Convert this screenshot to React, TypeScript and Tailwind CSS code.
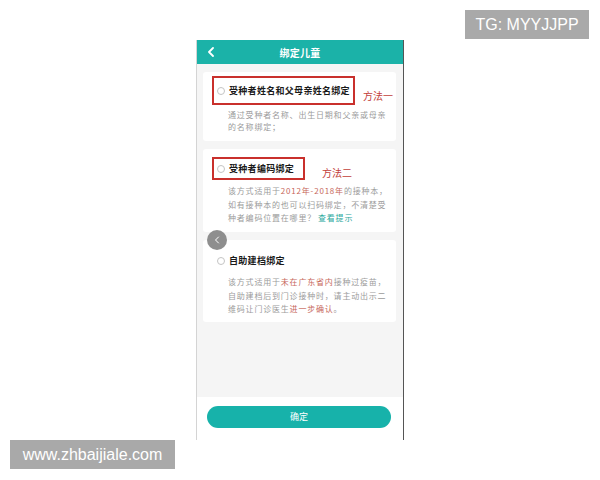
import React from 'react';

const cjk = "font-['Noto_Sans_CJK_SC','Noto_Sans',sans-serif]";

function Radio() {
  return <span className="w-[8px] h-[8px] rounded-full border border-[#c4c4c4] bg-white mr-[4px] shrink-0" />;
}

function TitleRow({
  title,
  boxW,
  boxH,
  highlight,
  label,
  labelGap,
  labelDrop,
}: {
  title: string;
  boxW: string;
  boxH: string;
  highlight?: boolean;
  label?: string;
  labelGap?: string;
  labelDrop?: string;
}) {
  return (
    <div className="flex items-center ml-[9px]">
      <div
        className={`${boxW} ${boxH} flex items-center pl-[3px] border-2 ${
          highlight ? 'border-[#c9302c]' : 'border-transparent'
        }`}
      >
        <Radio />
        <span className="text-[9px] font-bold tracking-[0.3px] text-[#1a1a1a] whitespace-nowrap">{title}</span>
      </div>
      {label && (
        <span className={`${labelGap} ${labelDrop} text-[10px] text-[#c2403a] whitespace-nowrap`}>{label}</span>
      )}
    </div>
  );
}

const red = 'text-[#c7675b]';

export default function App() {
  return (
    <div className={`relative w-[600px] h-[480px] bg-white overflow-hidden ${cjk}`}>
      <div className="pt-[40px]">
        <div className="mx-auto w-[208px] h-[400px] flex flex-col border-l border-[#d4d4d4] border-r border-r-[#555]">
          {/* header */}
          <div className="h-[24px] bg-[#1bb2a8] grid grid-cols-[1fr_auto_1fr] items-center">
            <div className="pl-[10px] flex items-center">
              <svg width="8" height="10" viewBox="0 0 8 10" fill="none">
                <path d="M6 1 L2 5 L6 9" stroke="white" strokeWidth="1.8" strokeLinecap="round" strokeLinejoin="round" />
              </svg>
            </div>
            <span className="text-[10px] font-bold text-white tracking-[0.3px]">绑定儿童</span>
            <div />
          </div>

          {/* content */}
          <div className="flex-1 bg-[#f5f5f5] pl-[6px] pr-[7px] pt-[8px] flex flex-col gap-[8px]">
            <div className="bg-white rounded-[3px] pt-[4px] pb-[8px]">
              <TitleRow
                title="受种者姓名和父母亲姓名绑定"
                boxW="w-[143px]"
                boxH="h-[29px]"
                highlight
                label="方法一"
                labelGap="ml-[8px]"
                labelDrop="mt-[9px]"
              />
              <div className="mt-[4px] pl-[25px] text-[8px] leading-[12px] tracking-[0.8px] text-[#9b9b9b] whitespace-nowrap">
                <div>通过受种者名称、出生日期和父亲或母亲</div>
                <div>的名称绑定；</div>
              </div>
            </div>

            <div className="bg-white rounded-[3px] pt-[8px] pb-[7.5px]">
              <TitleRow
                title="受种者编码绑定"
                boxW="w-[93px]"
                boxH="h-[23px]"
                highlight
                label="方法二"
                labelGap="ml-[17px]"
                labelDrop="mt-[7px]"
              />
              <div className="mt-[4px] pl-[25px] text-[8px] leading-[13.5px] tracking-[0.8px] text-[#9b9b9b] whitespace-nowrap">
                <div>
                  该方式适用于<span className={red}>2012年-2018年</span>的接种本，
                </div>
                <div>如有接种本的也可以扫码绑定，不清楚受</div>
                <div>
                  种者编码位置在哪里？<span className="ml-[2px] text-[#2aa89c]">查看提示</span>
                </div>
              </div>
            </div>

            <div className="bg-white rounded-[3px] pt-[9px] pb-[6.5px]">
              <TitleRow title="自助建档绑定" boxW="w-[93px]" boxH="h-[23px]" />
              <div className="mt-[3px] pl-[25px] text-[8px] leading-[13.5px] tracking-[0.8px] text-[#9b9b9b] whitespace-nowrap">
                <div>
                  该方式适用于<span className={red}>未在广东省内</span>接种过疫苗，
                </div>
                <div>自助建档后到门诊接种时，请主动出示二</div>
                <div>
                  维码让门诊医生<span className={red}>进一步确认</span>。
                </div>
              </div>
            </div>
          </div>

          {/* footer */}
          <div className="h-[43px] bg-white pt-[9px] pl-[10px] pr-[12px]">
            <div className="h-[22px] rounded-full bg-[#17b2aa] flex items-center justify-center text-[9px] text-white">
              确定
            </div>
          </div>
        </div>
      </div>

      {/* floating back button */}
      <div className="absolute left-[207px] top-[230px] w-[20px] h-[20px] rounded-full bg-[#8e8e8e] flex items-center justify-center">
        <svg width="6" height="8" viewBox="0 0 6 8" fill="none">
          <path d="M4.5 1 L1.5 4 L4.5 7" stroke="white" strokeWidth="1" strokeLinecap="round" strokeLinejoin="round" />
        </svg>
      </div>

      {/* watermarks */}
      <div className="absolute left-[465px] top-[10px] w-[124px] h-[29px] bg-[#a9a9a9] flex items-center justify-center font-['Liberation_Sans',sans-serif] text-[16px] text-white">
        TG: MYYJJPP
      </div>
      <div className="absolute left-[10px] top-[440px] w-[165px] h-[29px] bg-[#a9a9a9] flex items-center justify-center font-['Liberation_Sans',sans-serif] text-[16px] text-white">
        www.zhbaijiale.com
      </div>
    </div>
  );
}
